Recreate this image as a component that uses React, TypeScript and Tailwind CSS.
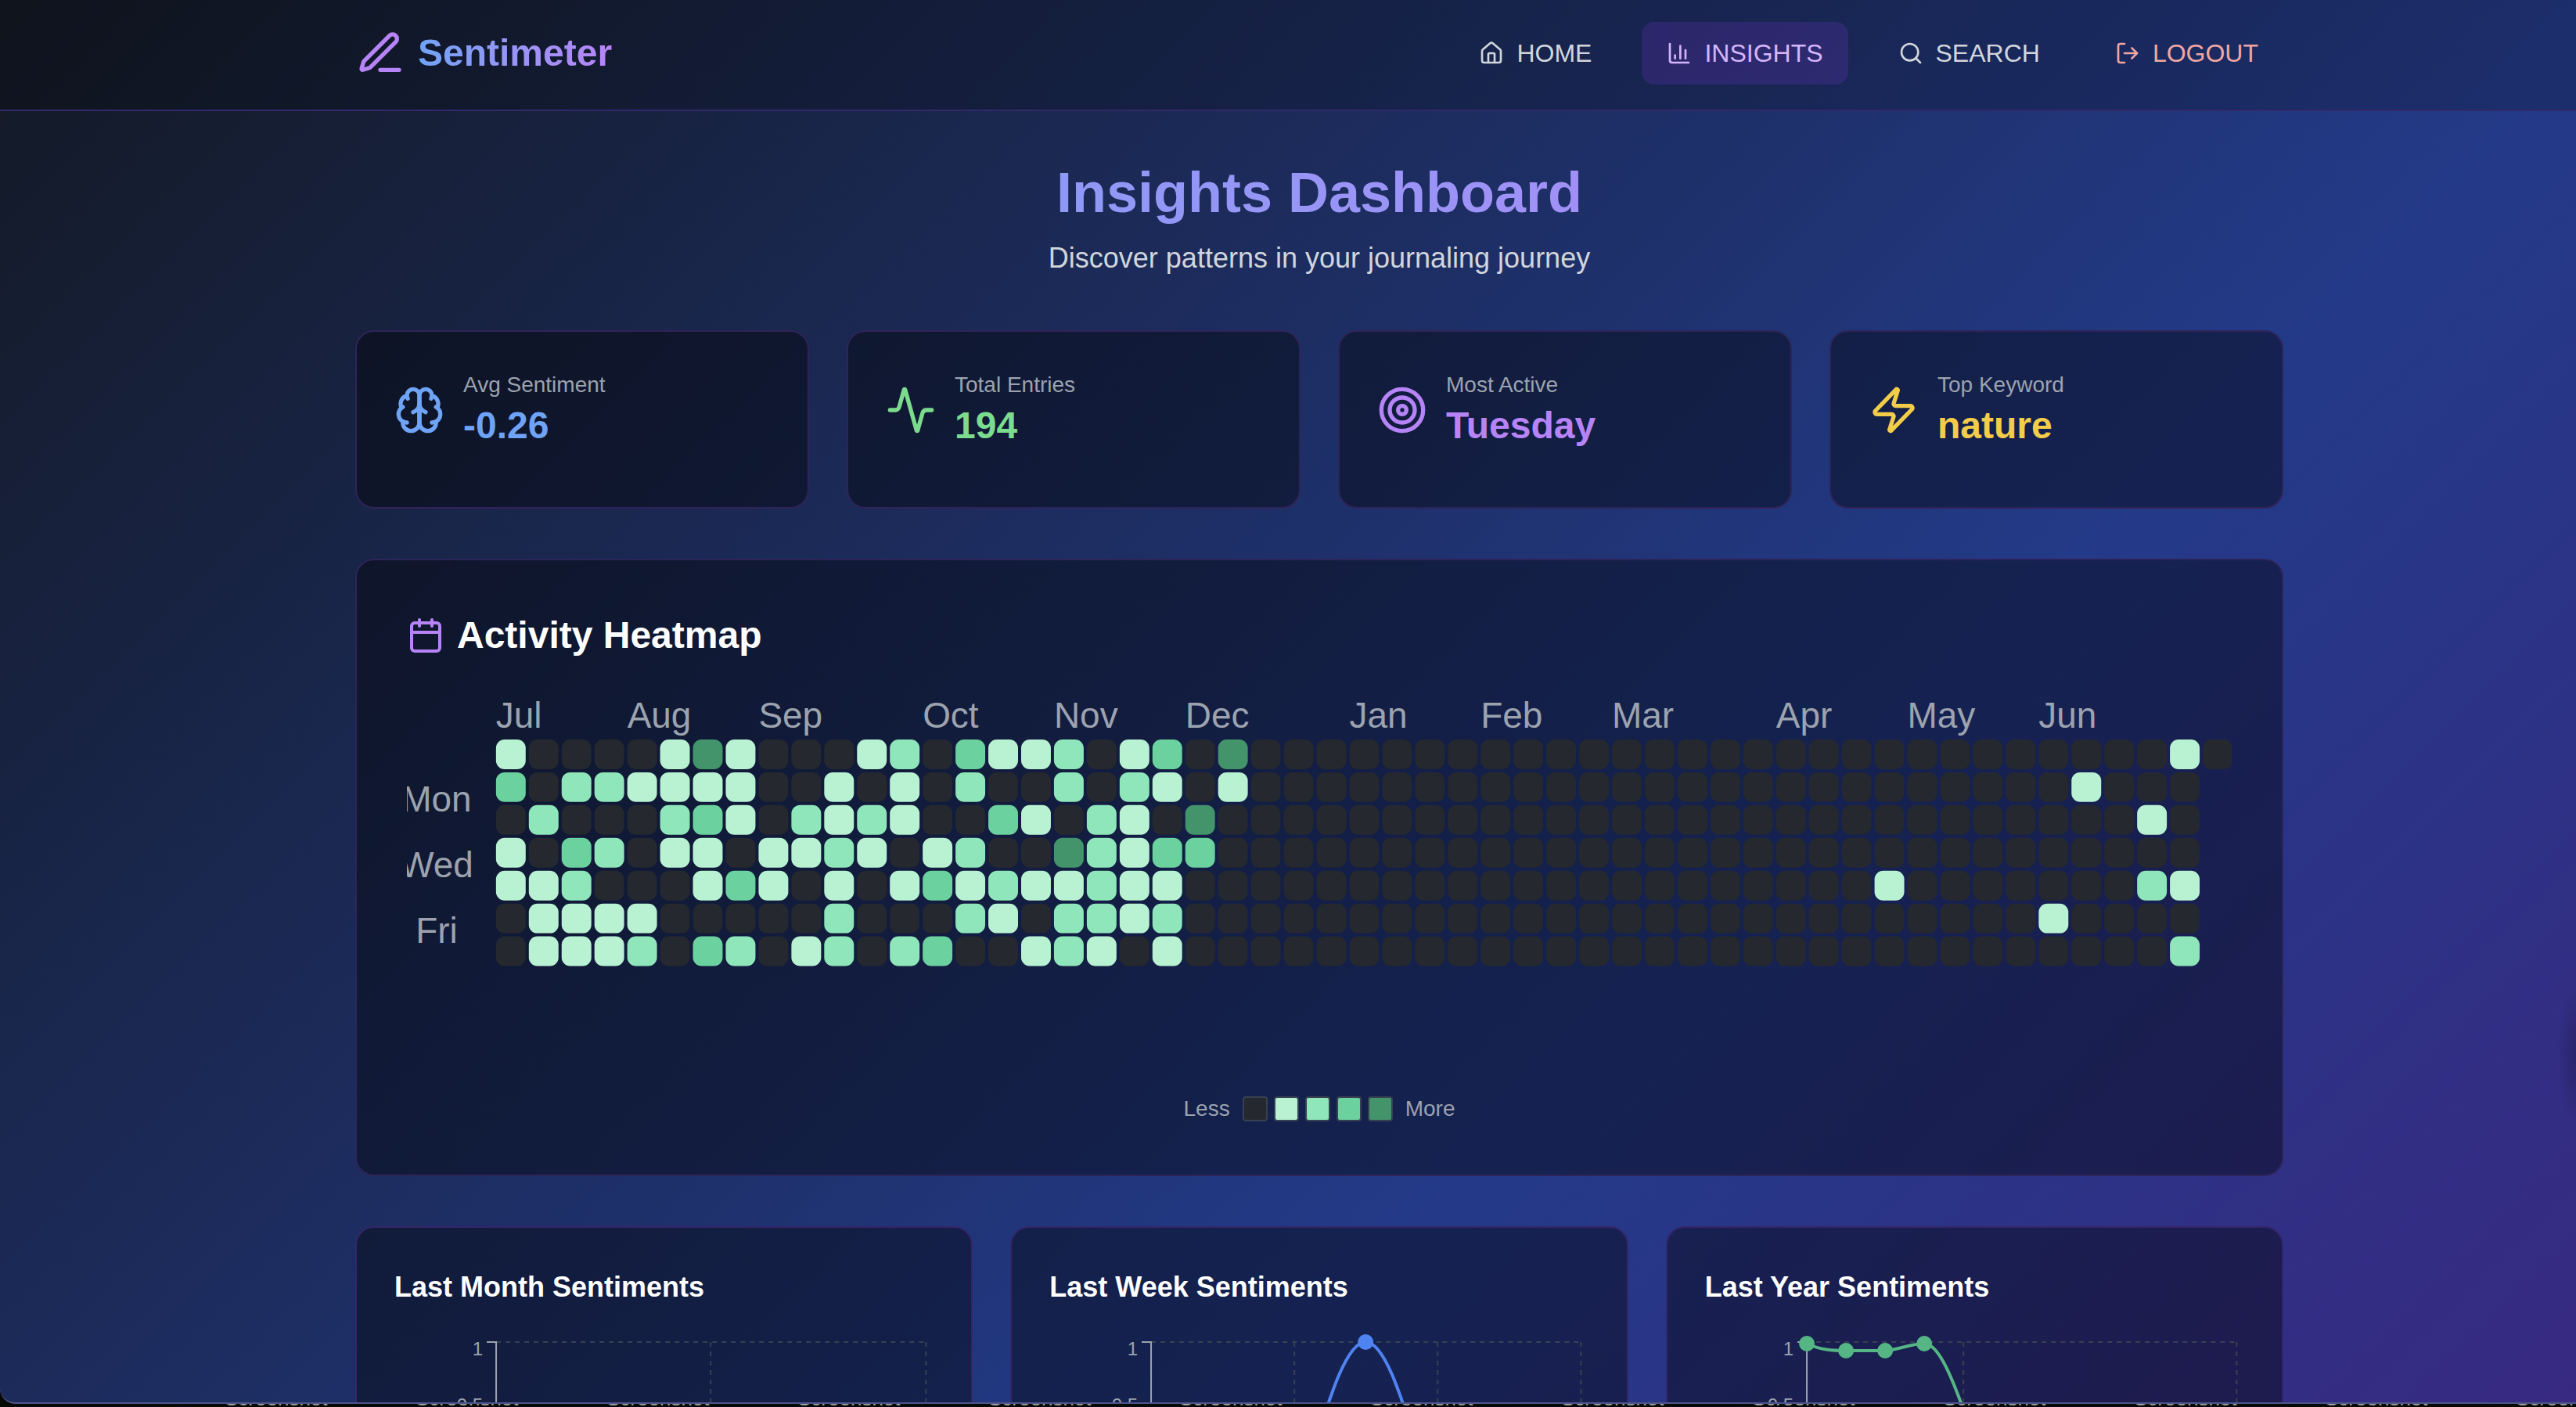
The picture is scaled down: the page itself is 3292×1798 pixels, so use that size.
import React from "react";
import { Activity, Calendar, ChartColumn, House, LogOut, Search, Target, Zap } from "lucide-react";

type IconProps = { className?: string };

function Stroked({ className, paths }: IconProps & { paths: string[] }) {
  return (
    <svg
      viewBox="0 0 24 24"
      fill="none"
      stroke="currentColor"
      strokeWidth="2"
      strokeLinecap="round"
      strokeLinejoin="round"
      className={className}
      aria-hidden="true"
    >
      {paths.map((d) => (
        <path key={d} d={d} />
      ))}
    </svg>
  );
}

function Pen({ className }: IconProps) {
  return (
    <Stroked
      className={className}
      paths={[
        "M12 20h9",
        "M16.376 3.622a1 1 0 0 1 3.002 3.002L7.368 18.635a2 2 0 0 1-.855.506l-2.872.838a.5.5 0 0 1-.62-.62l.838-2.872a2 2 0 0 1 .506-.854z",
      ]}
    />
  );
}

function Brain({ className }: IconProps) {
  return (
    <Stroked
      className={className}
      paths={[
        "M12 5a3 3 0 1 0-5.997.125 4 4 0 0 0-2.526 5.77 4 4 0 0 0 .556 6.588A4 4 0 1 0 12 18Z",
        "M12 5a3 3 0 1 1 5.997.125 4 4 0 0 1 2.526 5.77 4 4 0 0 1-.556 6.588A4 4 0 1 1 12 18Z",
        "M15 13a4.5 4.5 0 0 1-3-4 4.5 4.5 0 0 1-3 4",
        "M17.599 6.5a3 3 0 0 0 .399-1.375",
        "M6.003 5.125A3 3 0 0 0 6.401 6.5",
        "M3.477 10.896a4 4 0 0 1 .585-.396",
        "M19.938 10.5a4 4 0 0 1 .585.396",
        "M6 18a4 4 0 0 1-1.967-.516",
        "M19.967 17.484A4 4 0 0 1 18 18",
      ]}
    />
  );
}

const NAV = [
  { label: "HOME", Icon: House, style: "text-gray-300" },
  { label: "INSIGHTS", Icon: ChartColumn, style: "bg-[#8339db]/20 text-[#d5b5fb]" },
  { label: "SEARCH", Icon: Search, style: "text-gray-300" },
];

const STATS = [
  { label: "Avg Sentiment", value: "-0.26", Icon: Brain, color: "text-[#6fa3f5]" },
  { label: "Total Entries", value: "194", Icon: Activity, color: "text-[#7bdc8d]" },
  { label: "Most Active", value: "Tuesday", Icon: Target, color: "text-[#b784f7]" },
  { label: "Top Keyword", value: "nature", Icon: Zap, color: "text-[#f3cd4a]" },
];

/* One row per weekday, one digit per week: 0 is no entries, 4 the most.
   The quiet weeks between the two parts of a row are filled with zeros. */
const row = (head: string, tail: string, weeks = 52) => head.padEnd(weeks - tail.length, "0") + tail;

const WEEKS = [
  row("10000141000120311201304", "10", 53),
  row("30221111001010200202101", "1000"),
  row("0200023102121003102104", "10"),
  row("1032011011210120042133", ""),
  row("112000131010131211211", "1000000021"),
  row("011110000020002102212", "10000"),
  row("011120320120230012101", "2"),
];

const LEVELS = ["fill-[#25282f]", "fill-[#b9f1d3]", "fill-[#8ee6ba]", "fill-[#6bd19e]", "fill-[#43936b]"];
const SWATCHES = ["bg-[#25282f]", "bg-[#b9f1d3]", "bg-[#8ee6ba]", "bg-[#6bd19e]", "bg-[#43936b]"];

const MONTHS: [string, number][] = [
  ["Jul", 0], ["Aug", 4], ["Sep", 8], ["Oct", 13], ["Nov", 17], ["Dec", 21],
  ["Jan", 26], ["Feb", 30], ["Mar", 34], ["Apr", 39], ["May", 43], ["Jun", 47],
];

function Heatmap() {
  const pitch = 42;
  return (
    <svg viewBox="0 0 2335 474" className="block w-full overflow-hidden" role="img" aria-label="Entries per day">
      {MONTHS.map(([name, week]) => (
        <text key={name} x={114 + week * pitch} y={38} className="fill-[#9ca3af] text-[46px]">
          {name}
        </text>
      ))}
      {["Mon", "Wed", "Fri"].map((day, i) => (
        <text key={day} x={38} y={145 + i * 84} textAnchor="middle" className="fill-[#9ca3af] text-[46px]">
          {day}
        </text>
      ))}
      {WEEKS.map((levels, d) =>
        levels.split("").map((level, w) => (
          <rect
            key={`${d}-${w}`}
            x={114 + w * pitch}
            y={53 + d * pitch}
            width={38}
            height={38}
            rx={11}
            className={LEVELS[Number(level)]}
          />
        )),
      )}
    </svg>
  );
}

type ChartProps = { title: string; grid: number[]; color?: string; line?: string; dots?: number[][] };

function ChartCard({ title, grid, color, line, dots = [] }: ChartProps) {
  return (
    <section className="rounded-3xl border-2 border-[#35256a] bg-black/40 p-12">
      <h3 className="text-[36px] leading-14 font-bold text-white">{title}</h3>
      <svg viewBox="0 0 689 400" className="mt-8 block w-full overflow-visible" role="img" aria-label={title}>
        <g className="stroke-[#374151]" strokeWidth="2" strokeDasharray="6 6">
          <path d="M130 10H679" />
          {grid.map((x) => (
            <path key={x} d={`M${x} 10V390`} />
          ))}
        </g>
        <path d="M118 10H130V390M118 92H130" fill="none" strokeWidth="2" className="stroke-[#9ca3af]" />
        <text x="113" y="27" textAnchor="end" className="fill-[#9ca3af] text-[24px]">1</text>
        <text x="113" y="99" textAnchor="end" className="fill-[#9ca3af] text-[24px]">0.5</text>
        {line && <path d={line} fill="none" stroke={color} strokeWidth="4" />}
        {dots.map(([x, y]) => (
          <circle key={x} cx={x} cy={y} r="10" fill={color} />
        ))}
      </svg>
    </section>
  );
}

export default function App() {
  return (
    <div className="flex h-screen flex-col overflow-hidden bg-[#060906] font-['Liberation_Sans',Arial,sans-serif]">
      <div className="relative min-h-0 flex-1 overflow-hidden rounded-bl-[20px] border-b-2 border-[#4d5488] bg-[#233a86] bg-linear-to-br/srgb from-[#131924] via-[#233a88] to-[#4c1a7e] bg-[length:3372px_3330px] bg-no-repeat">
        <header className="border-b-2 border-[#33286a] bg-black/20 pl-20">
          <div className="mx-auto flex h-[140px] max-w-[2560px] items-start justify-between px-12 pt-7">
            <a href="#home" className="flex h-20 items-center gap-4">
              <Pen className="size-16 text-[#b784f7]" />
              <span className="bg-linear-to-r from-[#6fa3f5] to-[#b784f7] bg-clip-text text-[48px] leading-16 font-bold text-transparent">
                Sentimeter
              </span>
            </a>
            <nav className="flex gap-8">
              {NAV.map(({ label, Icon, style }) => (
                <a key={label} href="#" className={`flex h-20 items-center gap-4 rounded-2xl px-8 text-[32px] ${style}`}>
                  <Icon className="size-8" />
                  {label}
                </a>
              ))}
              <button type="button" className="flex h-20 items-center gap-4 rounded-2xl px-8 text-[32px] text-[#f2a6a3]">
                <LogOut className="size-8" />
                LOGOUT
              </button>
            </nav>
          </div>
        </header>
        <div className="pl-20">
          <main className="mx-auto max-w-[2560px] px-12 pt-16">
            <h1 className="bg-linear-to-r from-[#6fa3f5] to-[#b784f7] bg-clip-text text-center text-[72px] leading-20 font-bold text-transparent">
              Insights Dashboard
            </h1>
            <p className="mt-4 text-center text-[36px] leading-14 text-gray-300">
              Discover patterns in your journaling journey
            </p>
            <div className="mt-16 grid grid-cols-4 gap-12">
              {STATS.map(({ label, value, Icon, color }) => (
                <section key={label} className="rounded-3xl border-2 border-[#2f2459] bg-black/40 px-12 pt-12 pb-18">
                  <div className="flex items-center gap-6">
                    <Icon className={`size-16 ${color}`} />
                    <div>
                      <p className="text-[28px] leading-10 text-[#9ca3af]">{label}</p>
                      <p className={`text-[48px] leading-16 font-bold ${color}`}>{value}</p>
                    </div>
                  </div>
                </section>
              ))}
            </div>
            <section className="mt-16 rounded-3xl border-2 border-[#2f2459] bg-black/40 p-16">
              <h2 className="flex items-center gap-4 text-[48px] leading-16 font-bold text-white">
                <Calendar className="size-12 text-[#b784f7]" />
                Activity Heatmap
              </h2>
              <div className="mt-12">
                <Heatmap />
              </div>
              <div className="mt-8 flex items-center justify-center gap-4 text-[28px] leading-10 text-[#9ca3af]">
                <span>Less</span>
                <div className="flex gap-2">
                  {SWATCHES.map((c) => (
                    <span key={c} className={`size-8 rounded-sm border-2 border-[#374151] ${c}`} />
                  ))}
                </div>
                <span>More</span>
              </div>
            </section>
            <div className="mt-16 grid grid-cols-3 gap-12">
              <ChartCard title="Last Month Sentiments" grid={[404, 679]} />
              <ChartCard
                title="Last Week Sentiments"
                grid={[313, 496, 679]}
                color="#4f83f1"
                line="M313 220C343 140 371 10 404 10C437 10 465 140 495 220"
                dots={[[404, 10]]}
              />
              <ChartCard
                title="Last Year Sentiments"
                grid={[330, 679]}
                color="#55b585"
                line="M130 12C147 20 163 21 180 21H230C247 20 263 12 280 12C297 12 313 50 327 88L347 150"
                dots={[[130, 12], [180, 21], [230, 21], [280, 12]]}
              />
            </div>
          </main>
        </div>
        <div className="absolute top-[1260px] right-0 h-44 w-6 bg-radial-[ellipse_at_right] from-black/20 to-transparent to-70%" />
      </div>
      {/* Desktop file names, of which only the feet show below the window */}
      <footer className="flex h-1 items-end overflow-hidden pl-[287px] text-[26px] leading-[22px] text-[#a0a0a0]">
        {Array.from({ length: 13 }, (_, i) => (
          <span key={i} className="w-61 shrink-0">Screenshot</span>
        ))}
      </footer>
    </div>
  );
}
